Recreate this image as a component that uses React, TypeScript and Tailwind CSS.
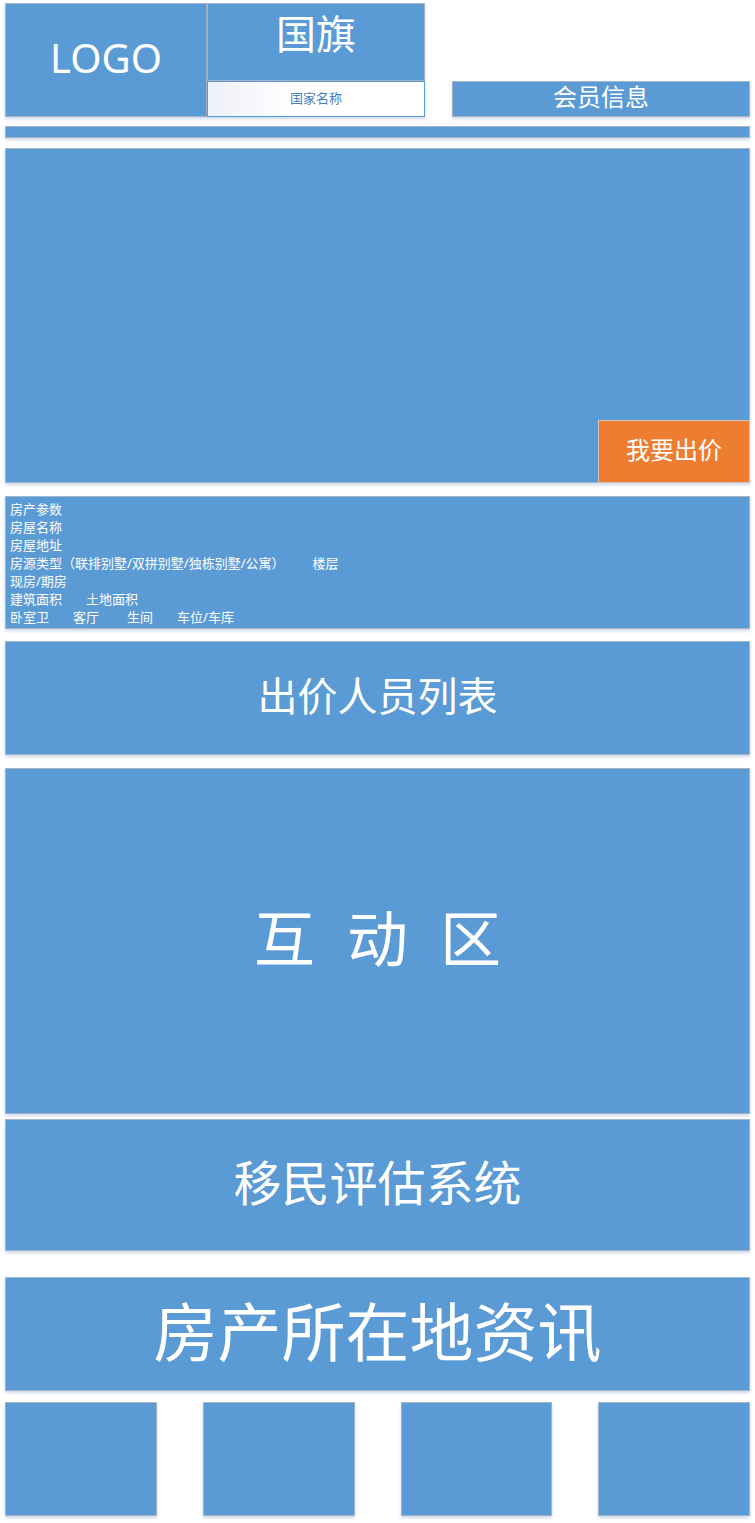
import type { ReactNode } from "react";

const surface =
  "border border-[#a5b4c6] bg-[#5b9bd5] text-white shadow-[0_2px_3px_rgba(91,130,190,0.3)]";

function Panel({ className, children }: { className: string; children?: ReactNode }) {
  return (
    <section className={`${surface} flex items-center justify-center pb-1 ${className}`}>{children}</section>
  );
}

export default function App() {
  return (
    <main className="bg-white px-[5px] pt-[3px] pb-[8px] font-['Noto_Sans','Noto_Sans_CJK_SC',sans-serif] text-white">
      <header className="grid grid-cols-[202fr_218fr_27fr_298fr]">
        <div className={`${surface} flex h-[114px] items-center justify-center pb-1 text-[40px]`}>
          <a href="#home">LOGO</a>
        </div>
        <div className="flex h-[114px] flex-col">
          <div className={`${surface} flex h-[78px] items-center justify-center pb-4 text-[40px]`}>国旗</div>
          <div className="flex h-[36px] items-center justify-center border border-[#5b9bd5] bg-linear-to-r from-[#eef0f8] to-white to-40% text-[13px] text-[#4a7ebb] shadow-[0_2px_3px_rgba(91,130,190,0.3)]">
            国家名称
          </div>
        </div>
        <div />
        <div className={`${surface} flex h-[36px] items-center justify-center self-end pb-1 text-[24px]`}>
          会员信息
        </div>
      </header>

      <nav className={`${surface} mt-[9px] h-[12px]`} aria-label="主导航" />

      <section className={`${surface} mt-[10px] flex h-[335px] items-end justify-end`}>
        <button
          type="button"
          className="-mr-px -mb-px h-[63px] w-[152px] border border-[#d3c3bb] bg-[#ed7d31] pb-1 text-[24px] text-white"
        >
          我要出价
        </button>
      </section>

      <section className={`${surface} mt-[13px] min-h-[133px] px-1 pt-[3px] text-[13px] leading-[18px]`}>
        <p>房产参数</p>
        <p>房屋名称</p>
        <p>房屋地址</p>
        <p className="flex gap-7">
          <span>房源类型（联排别墅/双拼别墅/独栋别墅/公寓）</span>
          <span>楼层</span>
        </p>
        <p>现房/期房</p>
        <p className="flex gap-6">
          <span>建筑面积</span>
          <span>土地面积</span>
        </p>
        <p className="flex gap-6">
          <span>卧室卫</span>
          <span className="flex gap-7">
            <span>客厅</span>
            <span>生间</span>
          </span>
          <span>车位/车库</span>
        </p>
      </section>

      <Panel className="mt-[12px] h-[114px] text-[40px]">出价人员列表</Panel>
      <Panel className="mt-[13px] h-[346px] gap-8 text-[61px]">
        <span>互</span>
        <span>动</span>
        <span>区</span>
      </Panel>
      <Panel className="mt-[5px] h-[132px] text-[48px]">移民评估系统</Panel>
      <Panel className="mt-[26px] h-[114px] text-[64px]">房产所在地资讯</Panel>

      <div className="mt-[11px] grid grid-cols-4 gap-[46px]">
        <Panel className="h-[114px]" />
        <Panel className="h-[114px]" />
        <Panel className="h-[114px]" />
        <Panel className="h-[114px]" />
      </div>
    </main>
  );
}
